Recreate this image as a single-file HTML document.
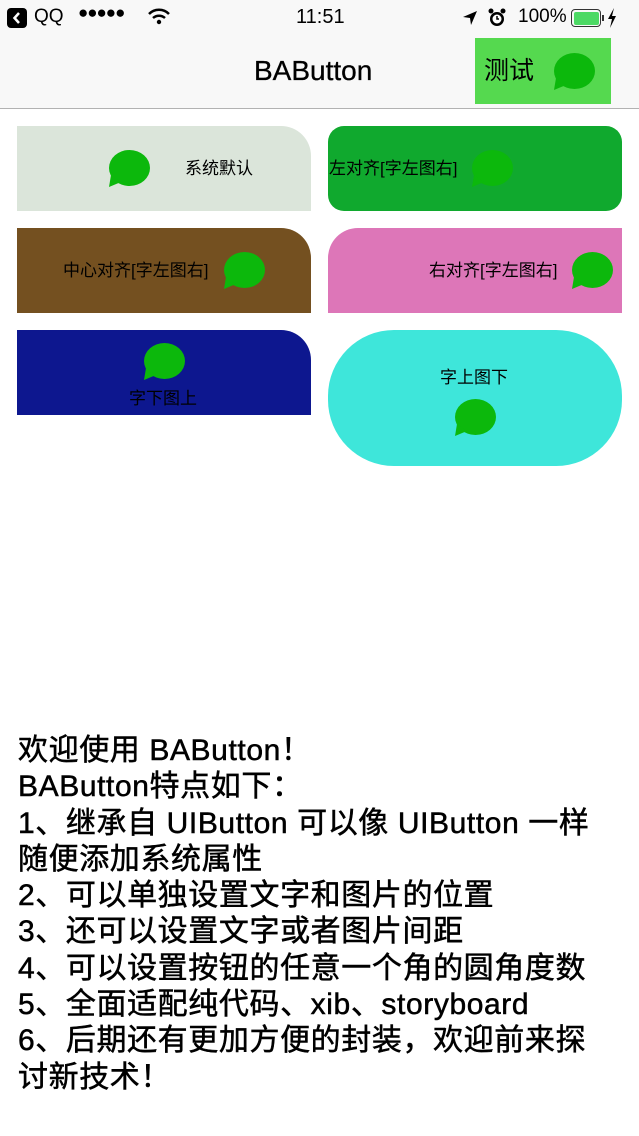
<!DOCTYPE html>
<html><head><meta charset="utf-8"><style>
*{margin:0;padding:0;box-sizing:border-box}
body{width:639px;height:1136px;background:#fff;position:relative;overflow:hidden;font-family:"Liberation Sans","Noto Sans CJK SC",sans-serif;color:#000}
.a{position:absolute}
.btn{position:absolute;overflow:hidden}
.t{position:absolute;font-size:17px;line-height:20px;white-space:nowrap}
svg.b{position:absolute}
.txt{position:absolute;left:18px;top:733px;font-size:30px;letter-spacing:0.6px;line-height:36.3px;width:630px;white-space:nowrap;-webkit-text-stroke:0.5px #000}
</style></head><body>
<div class="a" style="left:0;top:0;width:639px;height:109px;background:#f8f8f8;border-bottom:1px solid #b2b2b2"></div>
<div class="a" style="left:7px;top:8px;width:20px;height:20px;background:#000;border-radius:4px"></div>
<svg class="a" style="left:7px;top:8px" width="20" height="20"><path d="M12 5 L7.5 10 L12 15" stroke="#fff" stroke-width="2.5" fill="none"/></svg>
<div class="a" style="left:34px;top:6px;font-size:19px">QQ</div>
<div class="a" style="left:78px;top:3px;font-size:17px;letter-spacing:-1px">●●●●●</div>
<svg class="a" style="left:148px;top:8px" width="22" height="17"><path d="M1 6 A14 14 0 0 1 21 6" stroke="#000" stroke-width="2.5" fill="none"/><path d="M5 10 A9 9 0 0 1 17 10" stroke="#000" stroke-width="2.5" fill="none"/><circle cx="11" cy="14" r="2.2"/></svg>
<div class="a" style="left:296px;top:6px;font-size:20px">11:51</div>
<svg class="a" style="left:462px;top:10px" width="16" height="16"><path d="M15 1 L1 7 L8 8 L9 15 Z"/></svg>
<svg class="a" style="left:487px;top:8px" width="20" height="20"><circle cx="10" cy="11" r="7" fill="#000"/><circle cx="10" cy="11" r="4.5" fill="#fff"/><path d="M10 8 V11 H12" stroke="#000" stroke-width="1.5" fill="none"/><circle cx="4" cy="3" r="2.5"/><circle cx="16" cy="3" r="2.5"/></svg>
<div class="a" style="left:518px;top:6px;font-size:19px">100%</div>
<div class="a" style="left:571px;top:9px;width:30px;height:18px;border:1.5px solid #333;border-radius:4px;padding:1.5px"><div style="width:100%;height:100%;background:#4cd964;border-radius:2px"></div></div>
<div class="a" style="left:602px;top:15px;width:2px;height:6px;background:#333"></div>
<svg class="a" style="left:607px;top:8px" width="10" height="20"><path d="M7 0 L1 11 H5 L3 20 L9 8 H5 Z"/></svg>
<div class="a" style="left:254px;top:55px;font-size:28px;-webkit-text-stroke:0.3px #000">BAButton</div>
<div class="a" style="left:475px;top:38px;width:136px;height:66px;background:#55d94f"></div>
<div class="a" style="left:484px;top:57px;font-size:25px;line-height:28px">测试</div>
<svg class="b" style="left:552px;top:52px" width="44" height="40"><ellipse cx="22.5" cy="19" rx="20.5" ry="18" fill="#0cb80c"/><path d="M4 26 L2 38 L14 33 Z" fill="#0cb80c"/></svg>

<div class="btn" style="left:17px;top:126px;width:294px;height:85px;background:#dbe5da;border-top-right-radius:30px"></div>
<svg class="b" style="left:107px;top:149px" width="44" height="40"><ellipse cx="22.5" cy="19" rx="20.5" ry="18" fill="#0cb80c"/><path d="M4 26 L2 38 L14 33 Z" fill="#0cb80c"/></svg>
<div class="t" style="left:185px;top:159px">系统默认</div>

<div class="btn" style="left:328px;top:126px;width:294px;height:85px;background:#10a92e;border-radius:16px"></div>
<svg class="b" style="left:470px;top:149px" width="44" height="40"><ellipse cx="22.5" cy="19" rx="20.5" ry="18" fill="#0cb80c"/><path d="M4 26 L2 38 L14 33 Z" fill="#0cb80c"/></svg>
<div class="t" style="left:329px;top:159px">左对齐[字左图右]</div>

<div class="btn" style="left:17px;top:228px;width:294px;height:85px;background:#745020;border-top-right-radius:30px"></div>
<div class="t" style="left:63px;top:261px">中心对齐[字左图右]</div>
<svg class="b" style="left:222px;top:251px" width="44" height="40"><ellipse cx="22.5" cy="19" rx="20.5" ry="18" fill="#0cb80c"/><path d="M4 26 L2 38 L14 33 Z" fill="#0cb80c"/></svg>

<div class="btn" style="left:328px;top:228px;width:294px;height:85px;background:#dd76b8;border-top-left-radius:30px"></div>
<div class="t" style="left:429px;top:261px">右对齐[字左图右]</div>
<svg class="b" style="left:570px;top:251px" width="44" height="40"><ellipse cx="22.5" cy="19" rx="20.5" ry="18" fill="#0cb80c"/><path d="M4 26 L2 38 L14 33 Z" fill="#0cb80c"/></svg>

<div class="btn" style="left:17px;top:330px;width:294px;height:85px;background:#0d178f;border-top-right-radius:30px"></div>
<svg class="b" style="left:142px;top:342px" width="44" height="40"><ellipse cx="22.5" cy="19" rx="20.5" ry="18" fill="#0cb80c"/><path d="M4 26 L2 38 L14 33 Z" fill="#0cb80c"/></svg>
<div class="t" style="left:129px;top:389px">字下图上</div>

<div class="btn" style="left:328px;top:330px;width:294px;height:136px;background:#3ee6da;border-radius:66px"></div>
<div class="t" style="left:440px;top:368px">字上图下</div>
<svg class="b" style="left:453px;top:398px" width="44" height="40"><ellipse cx="22.5" cy="19" rx="20.5" ry="18" fill="#0cb80c"/><path d="M4 26 L2 38 L14 33 Z" fill="#0cb80c"/></svg>

<div class="txt">欢迎使用 BAButton！<br>BAButton特点如下：<br>1、继承自 UIButton 可以像 UIButton 一样<br>随便添加系统属性<br>2、可以单独设置文字和图片的位置<br>3、还可以设置文字或者图片间距<br>4、可以设置按钮的任意一个角的圆角度数<br>5、全面适配纯代码、xib、storyboard<br>6、后期还有更加方便的封装，欢迎前来探<br>讨新技术！</div>
</body></html>
